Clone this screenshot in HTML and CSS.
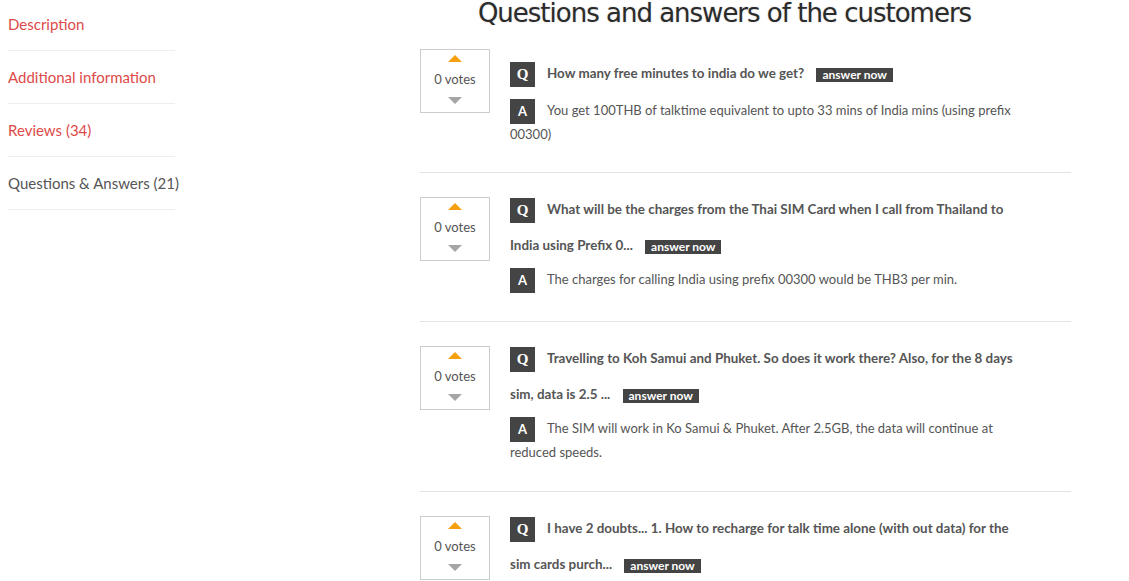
FILE: index.html
```html
<!DOCTYPE html>
<html lang="en">
<head>
    <meta charset="UTF-8">
    <meta name="viewport" content="width=device-width, initial-scale=1.0">
    <title>Questions &amp; Answers</title>
    <link rel="stylesheet" href="styles.css">
</head>
<body>
    <div class="page">
        <ul class="tabs">
            <li><a href="#">Description</a></li>
            <li><a href="#">Additional information</a></li>
            <li><a href="#">Reviews (34)</a></li>
            <li class="active"><a href="#">Questions &amp; Answers (21)</a></li>
        </ul>

        <div class="qa">
            <h2>Questions and answers of the customers</h2>

            <div class="qa-item qa-short">
                <div class="vote">
                    <span class="up"></span>
                    <div class="count">0 votes</div>
                    <span class="down"></span>
                </div>
                <div class="qa-body">
                    <p class="question"><span class="badge q">Q</span>How many free minutes to india do we get? <a class="answer-now" href="#">answer now</a></p>
                    <p class="answer"><span class="badge">A</span>You get 100THB of talktime equivalent to upto 33 mins of India mins (using prefix 00300)</p>
                </div>
            </div>

            <div class="qa-item">
                <div class="vote">
                    <span class="up"></span>
                    <div class="count">0 votes</div>
                    <span class="down"></span>
                </div>
                <div class="qa-body">
                    <p class="question"><span class="badge q">Q</span>What will be the charges from the Thai SIM Card when I call from Thailand to India using Prefix 0... <a class="answer-now" href="#">answer now</a></p>
                    <p class="answer"><span class="badge">A</span>The charges for calling India using prefix 00300 would be THB3 per min.</p>
                </div>
            </div>

            <div class="qa-item">
                <div class="vote">
                    <span class="up"></span>
                    <div class="count">0 votes</div>
                    <span class="down"></span>
                </div>
                <div class="qa-body">
                    <p class="question"><span class="badge q">Q</span>Travelling to Koh Samui and Phuket. So does it work there? Also, for the 8 days sim, data is 2.5 ... <a class="answer-now" href="#">answer now</a></p>
                    <p class="answer"><span class="badge">A</span>The SIM will work in Ko Samui &amp; Phuket. After 2.5GB, the data will continue at reduced speeds.</p>
                </div>
            </div>

            <div class="qa-item">
                <div class="vote">
                    <span class="up"></span>
                    <div class="count">0 votes</div>
                    <span class="down"></span>
                </div>
                <div class="qa-body">
                    <p class="question"><span class="badge q">Q</span>I have 2 doubts... 1. How to recharge for talk time alone (with out data) for the sim cards purch... <a class="answer-now" href="#">answer now</a></p>
                </div>
            </div>
        </div>
    </div>
</body>
</html>
```
FILE: styles.css
```css
body {
    font-family: 'Lato', 'Liberation Sans', sans-serif;
    background: #fff;
    color: #555;
    margin: 0;
    padding: 0;
}
.page {
    display: flex;
    align-items: flex-start;
    padding-left: 8px;
}
.tabs {
    list-style: none;
    width: 167px;
    margin: -2px 0 0;
    padding: 0;
}
.tabs li {
    border-bottom: 1px solid #eee;
    padding: 14px 0;
    line-height: 24px;
    font-size: 15px;
    white-space: nowrap;
}
.tabs a {
    color: #dd4a48;
    text-decoration: none;
}
.tabs .active a {
    color: #555;
}
.qa {
    width: 651px;
    margin-left: 245px;
}
.qa h2 {
    font-family: 'DejaVu Sans', sans-serif;
    font-weight: normal;
    font-size: 26px;
    letter-spacing: -1px;
    line-height: 26px;
    color: #2b2b2b;
    text-align: center;
    padding-right: 42px;
    margin: 0 0 -1px;
    text-shadow: 0 0 2px rgba(0, 0, 0, 0.2);
}
.qa-item {
    display: flex;
    align-items: flex-start;
    padding: 24px 46px 28px 0;
    border-bottom: 1px solid #e3e3e3;
}
.qa-item.qa-short {
    padding-bottom: 27px;
}
.qa-item:last-child {
    border-bottom: none;
}
.vote {
    width: 68px;
    border: 1px solid #ccc;
    padding: 5px 0 8px;
    display: flex;
    flex-direction: column;
    align-items: center;
    flex-shrink: 0;
}
.up, .down {
    width: 0;
    height: 0;
    border-left: 7px solid transparent;
    border-right: 7px solid transparent;
}
.up {
    border-bottom: 7px solid #f5a011;
}
.down {
    border-top: 7px solid #a5a5a5;
    margin-top: 1px;
}
.count {
    font-size: 13px;
    line-height: 34px;
}
.qa-body {
    flex: 1;
    margin-left: 20px;
    font-size: 13px;
}
.question {
    margin: -6px 0 0;
    line-height: 36px;
    font-weight: bold;
    font-size: 13.4px;
}
.qa-short .question {
    margin-top: 6px;
}
.answer {
    margin: 5px 0 0;
    line-height: 21px;
}
.qa-short .answer {
    margin-top: 8px;
}
.badge {
    display: inline-block;
    width: 25px;
    height: 25px;
    line-height: 25px;
    background: #444;
    color: #fff;
    font-size: 13px;
    font-weight: bold;
    text-align: center;
    vertical-align: middle;
    margin-right: 12px;
}
.badge.q {
    font-family: 'Liberation Serif', serif;
    font-size: 15px;
}
.answer-now {
    display: inline-block;
    background: #444;
    color: #fff;
    font-size: 12px;
    font-weight: bold;
    line-height: 14px;
    padding: 0 6px;
    margin-left: 9px;
    text-decoration: none;
    vertical-align: middle;
}
```
